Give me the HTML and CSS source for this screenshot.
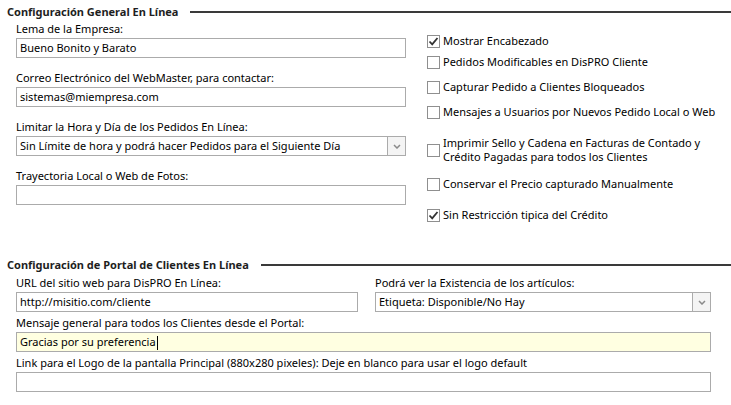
FILE: index.html
```html
<!DOCTYPE html>
<html lang="es">
<head>
<meta charset="utf-8">
<title>Configuración</title>
<link rel="stylesheet" href="styles.css">
</head>
<body>
<div class="page">
  <section class="sec sec-general">
    <div class="head"><span class="head-text">Configuración General En Línea</span><span class="head-line"></span></div>
    <div class="cols">
      <div class="left">
        <div class="field">
          <div class="label">Lema de la Empresa:</div>
          <div class="box">Bueno Bonito y Barato</div>
        </div>
        <div class="field">
          <div class="label">Correo Electrónico del WebMaster, para contactar:</div>
          <div class="box">sistemas@miempresa.com</div>
        </div>
        <div class="field">
          <div class="label">Limitar la Hora y Día de los Pedidos En Línea:</div>
          <div class="box select"><span class="sel-text">Sin Límite de hora y podrá hacer Pedidos para el Siguiente Día</span><span class="sel-btn"><svg width="8" height="5" viewBox="0 0 8 5"><path d="M1 1 L4 4 L7 1" fill="none" stroke="#8a8a8a" stroke-width="1.5"/></svg></span></div>
        </div>
        <div class="field">
          <div class="label">Trayectoria Local o Web de Fotos:</div>
          <div class="box"></div>
        </div>
      </div>
      <div class="right">
        <div class="chk r1"><span class="cb on"><svg width="11" height="11" viewBox="0 0 11 11"><path d="M1.5 5.5 L4.2 8.3 L9.5 2" fill="none" stroke="#333" stroke-width="1.8"/></svg></span><span class="ct">Mostrar Encabezado</span></div>
        <div class="chk r2"><span class="cb"></span><span class="ct">Pedidos Modificables en DisPRO Cliente</span></div>
        <div class="chk r3"><span class="cb"></span><span class="ct">Capturar Pedido a Clientes Bloqueados</span></div>
        <div class="chk r3"><span class="cb"></span><span class="ct">Mensajes a Usuarios por Nuevos Pedido Local o Web</span></div>
        <div class="chk r4"><span class="cb"></span><span class="ct">Imprimir Sello y Cadena en Facturas de Contado y<br>Crédito Pagadas para todos los Clientes</span></div>
        <div class="chk r5"><span class="cb"></span><span class="ct">Conservar el Precio capturado Manualmente</span></div>
        <div class="chk r4"><span class="cb on"><svg width="11" height="11" viewBox="0 0 11 11"><path d="M1.5 5.5 L4.2 8.3 L9.5 2" fill="none" stroke="#333" stroke-width="1.8"/></svg></span><span class="ct">Sin Restricción tipica del Crédito</span></div>
      </div>
    </div>
  </section>
  <section class="sec sec-portal">
    <div class="head"><span class="head-text">Configuración de Portal de Clientes En Línea</span><span class="head-line"></span></div>
    <div class="body2">
      <div class="row2">
        <div class="field f-url">
          <div class="label">URL del sitio web para DisPRO En Línea:</div>
          <div class="box">http://misitio.com/cliente</div>
        </div>
        <div class="field f-exist">
          <div class="label">Podrá ver la Existencia de los artículos:</div>
          <div class="box select"><span class="sel-text">Etiqueta: Disponible/No Hay</span><span class="sel-btn"><svg width="8" height="5" viewBox="0 0 8 5"><path d="M1 1 L4 4 L7 1" fill="none" stroke="#8a8a8a" stroke-width="1.5"/></svg></span></div>
        </div>
      </div>
      <div class="field wide">
        <div class="label">Mensaje general para todos los Clientes desde el Portal:</div>
        <div class="box yellow">Gracias por su preferencia<span class="caret"></span></div>
      </div>
      <div class="field wide">
        <div class="label">Link para el Logo de la pantalla Principal (880x280 pixeles): Deje en blanco para usar el logo default</div>
        <div class="box"></div>
      </div>
    </div>
  </section>
</div>
</body>
</html>
```
FILE: styles.css
```css
* { box-sizing: border-box; }
html, body { margin: 0; padding: 0; background: #fff; }
body {
  width: 731px;
  height: 405px;
  overflow: hidden;
  font-family: "Noto Sans", "DejaVu Sans", sans-serif;
  font-size: 11px;
  color: #000;
}
.page { padding-top: 4px; }
.head {
  display: flex;
  align-items: center;
  height: 15px;
  padding-left: 7px;
}
.head-text {
  font-weight: bold;
  font-size: 11px;
  color: #1e1e1e;
  white-space: nowrap;
}
.head-line {
  flex: 1;
  height: 2px;
  background: #3a3a3a;
  margin-left: 12px;
  margin-top: 1px;
}
.cols { display: flex; }
.left {
  width: 406px;
  padding-left: 16px;
  padding-top: 2px;
}
.field { margin-bottom: 12px; }
.label {
  height: 17px;
  line-height: 16px;
  white-space: nowrap;
}
.box {
  height: 20px;
  border: 1px solid #ababab;
  line-height: 18px;
  padding-left: 3px;
  white-space: nowrap;
  overflow: hidden;
  background: #fff;
}
.select { display: flex; padding-right: 0; }
.sel-text { flex: 1; overflow: hidden; }
.sel-btn {
  width: 18px;
  border-left: 1px solid #ababab;
  background: #f4f4f4;
  display: flex;
  align-items: center;
  justify-content: center;
}
.right {
  margin-left: 21px;
  padding-top: 15px;
}
.chk {
  display: flex;
  align-items: center;
  line-height: 14px;
}
.r1 { margin-top: 0; }
.r2 { margin-top: 7px; }
.r3 { margin-top: 11px; }
.r4 { margin-top: 17px; }
.r5 { margin-top: 13px; }
.cb {
  width: 13px;
  height: 13px;
  border: 1px solid #8f8f8f;
  background: #fff;
  margin-right: 3px;
  flex: none;
  display: flex;
  align-items: center;
  justify-content: center;
}
.ct { white-space: nowrap; }
.sec-portal { margin-top: 35px; }
.body2 {
  padding-left: 16px;
  width: 711px;
  padding-top: 3px;
}
.row2 { display: flex; }
.f-url { width: 342px; }
.f-exist { margin-left: 17px; flex: 1; }
.row2 .field { margin-bottom: 3px; }
.wide { margin-bottom: 3px; }
.yellow { background: #ffffe1; }
.caret {
  display: inline-block;
  width: 1px;
  height: 14px;
  background: #000;
  vertical-align: middle;
  margin-left: 1px;
}
```
